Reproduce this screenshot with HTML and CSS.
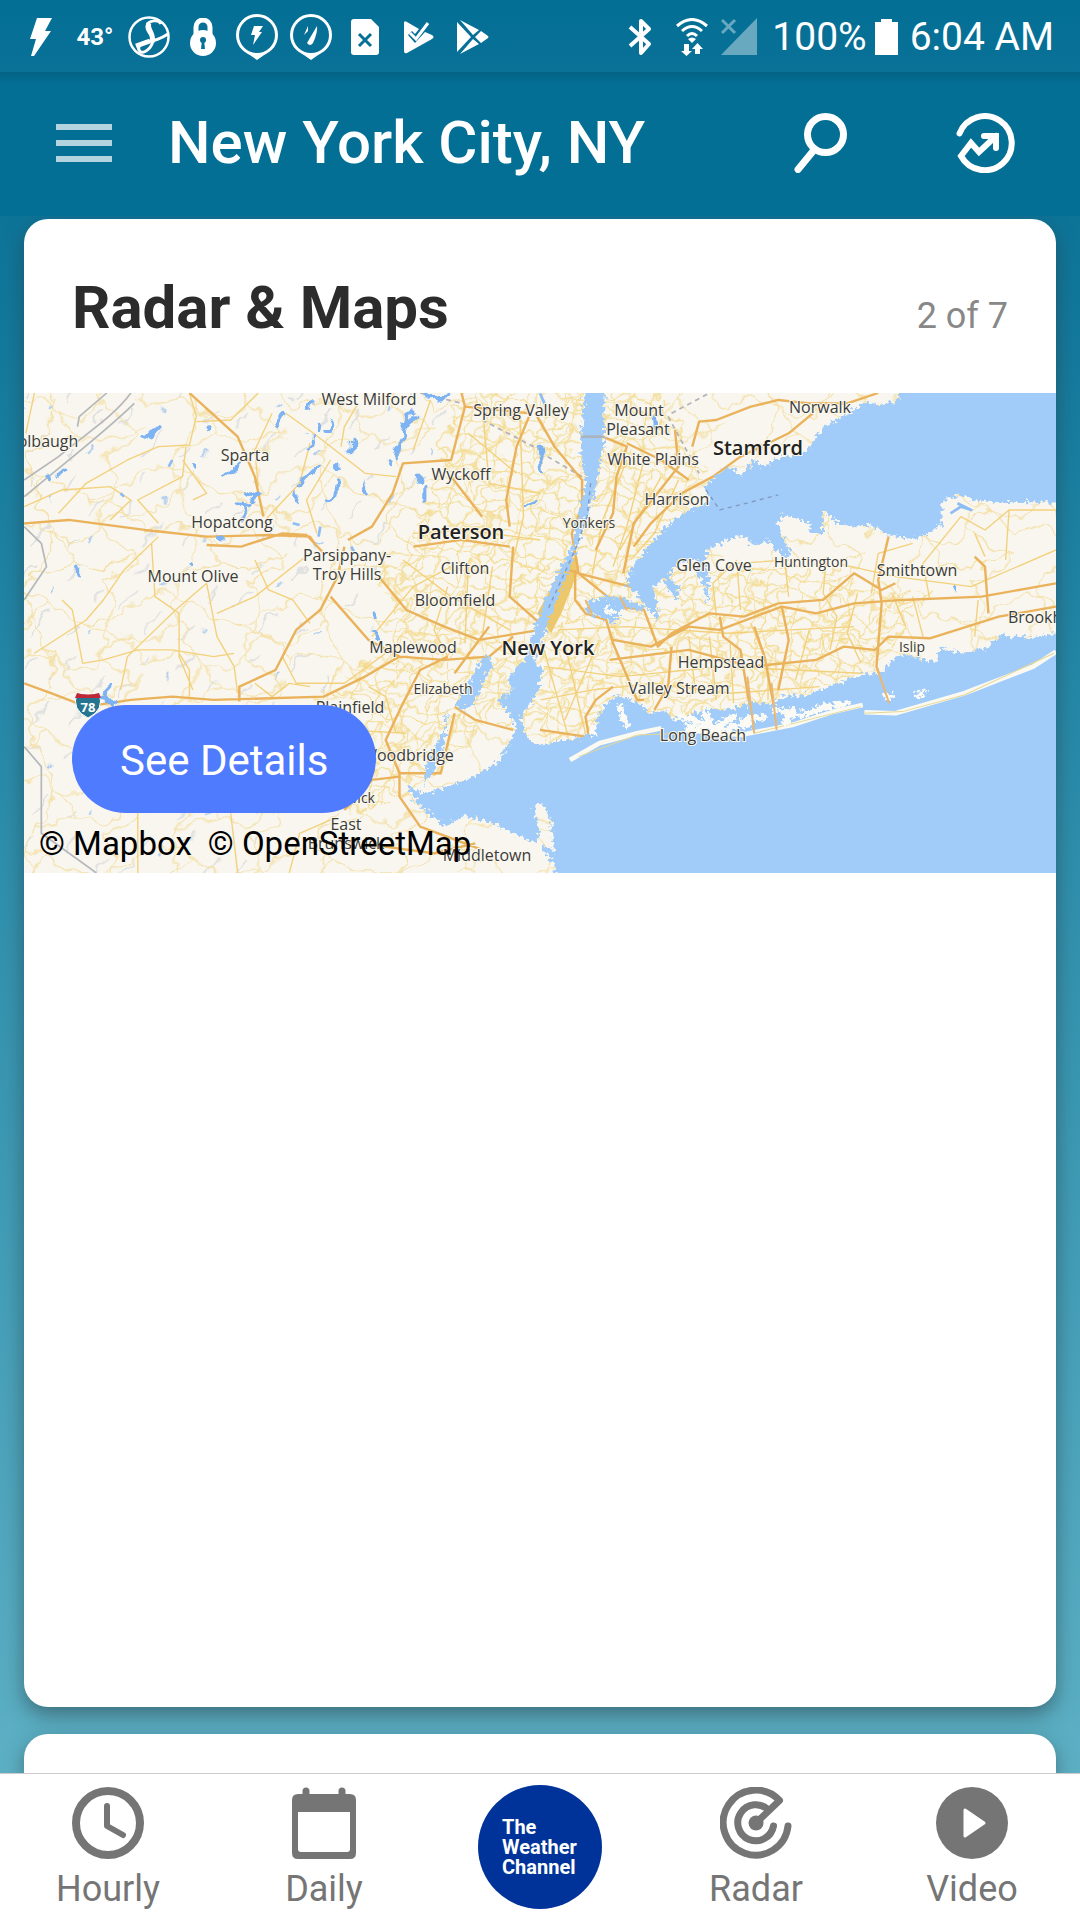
FILE: index.html
```html
<!DOCTYPE html>
<html lang="en">
<head>
<meta charset="utf-8">
<meta name="viewport" content="width=device-width, initial-scale=1">
<title>New York City, NY</title>
<link rel="stylesheet" href="styles.css">
</head>
<body>
<div class="status">
  <div class="notices">
    <svg width="22" height="38" viewBox="0 0 22 38"><path d="M7 0H22L15 13H21L4 38H1L6 21H0Z" fill="#fff"/></svg>
    <span class="temp">43°</span>
    <svg width="42" height="42" viewBox="0 0 42 42" fill="none" stroke="#fff"><circle cx="21" cy="21" r="19.500" stroke-width="2.500"/><path d="M33 8C31 3 20 4 19 10C18 17 28 20 24 28C21 35 13 39 11 34C9 30 14 27 18 26C26 25 34 22 40 18" stroke-width="3"/><path d="M21 7C18 13 27 18 24 26M8 30L22 25" stroke-width="5"/></svg>
    <svg width="26" height="38" viewBox="0 0 26 38"><path d="M6 17V9A7 7 0 0 1 20 9V17" fill="none" stroke="#fff" stroke-width="5"/><circle cx="13" cy="25" r="13" fill="#fff"/><circle cx="13" cy="22" r="3" fill="#067095"/><path d="M12 22H14L15 31H11Z" fill="#067095"/></svg>
    <svg class="pin" width="42" height="46" viewBox="0 0 42 46"><circle cx="21" cy="21" r="19.500" fill="none" stroke="#fff" stroke-width="3"/><path d="M11 39H31L21 46Z" fill="#fff"/><path d="M18 12H27L23 18H26L17 31L19 21H15Z" fill="#fff"/></svg>
    <svg class="pin" width="42" height="46" viewBox="0 0 42 46"><circle cx="21" cy="21" r="19.500" fill="none" stroke="#fff" stroke-width="3"/><path d="M11 39H31L21 46Z" fill="#fff"/><path d="M27 12Q28 18 23 29Q20 33 17 29ZM18 12L18 17L14 21Z" fill="#fff"/></svg>
    <svg width="28" height="36" viewBox="0 0 28 36"><path d="M3 0H20L28 8V33Q28 36 25 36H3Q0 36 0 33V3Q0 0 3 0Z" fill="#fff"/><path d="M8 15L20 27M20 15L8 27" stroke="#067095" stroke-width="3"/></svg>
    <svg width="30" height="34" viewBox="0 0 30 34"><path d="M0 3Q0 0 3 2L15 9L11 14L8 11L4 15L11 23L21 12L28 15Q31 17 28 19L3 33Q0 34 0 31Z" fill="#fff"/><path d="M6 13L12 19L24 3" fill="none" stroke="#fff" stroke-width="3"/></svg>
    <svg width="32" height="36" viewBox="0 0 32 36" fill="#fff"><path d="M0 3L14 18L0 33ZM3 1L22 11L16 16ZM3 35L22 25L16 20ZM24 12L31 17Q32 18 31 19L24 24L18 18Z"/></svg>
  </div>
  <div class="system">
    <svg class="bluetooth" width="24" height="40" viewBox="0 0 24 40"><path d="M2 10L21 27L13 36V4L21 12L2 29" fill="none" stroke="#fff" stroke-width="4" stroke-linejoin="round"/></svg>
    <svg class="wifi" width="32" height="38" viewBox="0 0 32 38"><path d="M1 8Q16-5 31 8M6 13Q16 4 26 13M11 18Q16 13 21 18" fill="none" stroke="#fff" stroke-width="3"/><path d="M12 21Q16 18 20 21L16 25ZM8 26H13V33H16L10.500 38L5 33H8ZM19 36V31H16L21.500 25L27 31H24V36Z" fill="#fff"/></svg>
    <svg class="signal" width="36" height="38" viewBox="0 0 36 38"><path d="M36 0V37H0Z" fill="#68a9c0"/><path d="M1 2L14 15M14 2L1 15" stroke="#68a9c0" stroke-width="3"/></svg>
    <span>100%</span>
    <svg class="battery" width="23" height="36" viewBox="0 0 23 36"><path d="M6 0H17V3H23V36H0V3H6Z" fill="#fff"/></svg>
    <span>6:04 AM</span>
  </div>
</div>

<header class="appbar">
  <button class="icon menu" aria-label="Menu"><svg width="56" height="38" viewBox="0 0 56 38"><path d="M0 3H56M0 19H56M0 35H56" stroke="#b3d4df" stroke-width="6"/></svg></button>
  <h1>New York City, NY</h1>
  <button class="icon" aria-label="Search"><svg width="54" height="60" viewBox="0 0 54 60" fill="none" stroke="#fff" stroke-width="7" stroke-linecap="round"><circle cx="31.500" cy="21.500" r="18"/><path d="M20 37L4 56.500"/></svg></button>
  <button class="icon" aria-label="Trending"><svg width="60" height="60" viewBox="0 0 60 60" fill="none" stroke="#fff" stroke-width="6" stroke-linejoin="miter" stroke-linecap="round"><path d="M3.500 20.500A27 27 0 1 1 5 43L15 30L23 39L40 23M28 23H40V35"/></svg></button>
</header>

<main>
  <section class="card">
    <div class="card-head"><h2>Radar &amp; Maps</h2><span class="count">2 of 7</span></div>
    <div class="map">
      <svg class="tiles" viewBox="24 393 1032 480" preserveAspectRatio="xMidYMid slice" role="img" aria-label="Map of the New York area">
        <defs>
          <pattern id="rural" width="420" height="380" patternUnits="userSpaceOnUse">
            <path d="M0 60Q60 20 130 70T250 130T420 60M90 0Q70 90 130 180T90 380M0 250Q90 190 170 250T300 210T420 250M300 0Q360 80 310 150T360 280T300 380M130 70L40 170L0 190M250 130L310 150M170 250L220 330L300 350L420 300M220 330L90 370M310 150L420 190" fill="none" stroke="#f4e0a8" stroke-width="4"/>
          </pattern>
          <pattern id="urban" width="150" height="130" patternUnits="userSpaceOnUse" patternTransform="rotate(12)">
            <path d="M0 20L60 10L150 20M0 70L50 80L110 60L150 70M20 0L30 60L20 130M70 0L60 50L80 130M115 0L125 70L115 130M0 105L80 110L150 105M30 60L70 0M80 130L125 70" fill="none" stroke="#f4dc92" stroke-width="4"/>
          </pattern>
          <pattern id="hills" width="330" height="270" patternUnits="userSpaceOnUse">
            <path d="M20 140L60 95M90 220L140 160M190 60L230 15M270 130L300 90M200 230L220 205M80 40L100 20" fill="none" stroke="#dfe0e0" stroke-width="6" stroke-linecap="round"/>
            <path d="M140 90L150 75M260 225L270 205" stroke="#b4cfef" stroke-width="7"/>
          </pattern>
          <filter id="wander" filterUnits="userSpaceOnUse" x="70" y="560" width="3020" height="1480">
            <feTurbulence type="fractalNoise" baseFrequency=".02" numOctaves="2" seed="4"/>
            <feDisplacementMap in="SourceGraphic" scale="60" xChannelSelector="R" yChannelSelector="G"/>
          </filter>
          <filter id="coast" filterUnits="userSpaceOnUse" x="1100" y="540" width="2000" height="1520">
            <feTurbulence type="fractalNoise" baseFrequency=".09" numOctaves="2" seed="8"/>
            <feDisplacementMap in="SourceGraphic" scale="36" xChannelSelector="R" yChannelSelector="G"/>
          </filter>
        </defs>
        <g transform="translate(0 200) scale(.3444 .3333)" fill="none" stroke-linejoin="round">
          <path d="M70 579H3066V2019H70Z" fill="#f8f6ee"/>
          <g filter="url(#wander)">
            <path d="M20 540H1340L1160 1000L1080 1330L700 2060H20Z" fill="url(#hills)"/>
            <path d="M20 540H3100V2060H20Z" fill="url(#rural)"/>
            <path d="M1340 540L1900 540L2050 800L1900 1100L2300 1100L2700 1180L2560 1400L2100 1560L1600 1640L1420 1560L1180 1800L1000 1850L1080 1500L900 1500L1180 1290L1060 1100L1200 1000Z" fill="url(#urban)"/>
          </g>
          <path d="M1560 1240L1640 1090L1670 1070L1680 1110L1630 1240L1600 1300Z" fill="#edc76b"/>
          <path d="M380 579C330 650 250 700 170 770L70 840M310 579L230 650L225 680M390 610C300 700 210 770 70 890M70 980L120 1030L135 1100L70 1200M70 1640L120 1700V1900L280 2019" stroke="#b5b8bb" stroke-width="5"/>
          <path d="M1220 579L1340 610M1400 660L1568 750M1590 770L1690 830M1950 640L2060 579M1940 650L2030 820" stroke="#b1b1bb" stroke-width="5" stroke-dasharray="14 12"/>

          <g stroke="#f3d17c" stroke-width="4">
            <path d="M100 579L75 700M170 940L250 850L370 780L460 740L550 735L570 650L550 579M570 665L670 660L750 579M790 640L740 750L750 860M990 740L1000 680L1040 610M830 640L910 700L1060 820L1150 830M70 920L180 870L320 860L380 900L320 960M460 970L400 900L530 830L540 740M530 780L600 880L560 900M770 960L870 850L900 730M920 1000L890 900L960 780"/>
            <path d="M100 1360L250 1260L300 1200L360 1110L460 1010M440 1030L450 1190L520 1240V1370L560 1470M600 1150L630 1310L680 1400L690 1480M240 1390L210 1230L180 1200M240 1390L300 1380L400 1350L500 1350L620 1370L680 1360M550 1490L550 1410L520 1360M600 1150L510 1230L370 1370L350 1470M630 1240L740 1190L900 1060M740 1080L780 1170L850 1200L900 1270M820 1370L860 1450H1000L1120 1360M740 1450L790 1490L840 1450L900 1460"/>
            <path d="M400 1840V2019M670 1840L690 2019M840 2019L870 1900L960 1860M1000 1590L1180 1600M1150 1600L1120 1490L1070 1460M1300 1160L1260 1290L1300 1370M1360 1090L1350 1330M1430 1100L1400 1310M1170 1080L1310 1190L1480 1290M1080 1310L1200 1160L1310 1100M1400 610L1420 850L1568 880M1250 600L1200 750M1360 700L1500 820M1510 660L1520 950L1490 1080M1200 1000L1350 990L1568 1020"/>
            <path d="M1970 840L1900 1000L1840 1070M1870 780L1820 980L1780 1100M1820 780L1750 960L1720 1120M1920 830L1800 1050M2080 1250L2070 1150L2140 1080M2150 1230L2140 1090L2290 1080M2290 1190L2280 1100M2400 1070L2390 1180L2430 1250L2410 1350M2490 1180L2460 1300L2500 1390M2530 1180L2550 1060L2650 1030M2700 1200L2680 1090L2790 950L2860 990L2930 930L3066 930M2930 930L2920 1080M2830 1000L2860 1070M2180 1270L2230 1400V1500M2350 1290L2310 1440M2000 1310L2020 1480M2060 1310L2080 1500M2120 1330L2130 1510M2650 1190L2680 1310M2840 1200L2830 1310"/>
            <path d="M2430 1090L2600 1130L2820 1160L3066 1050M2630 1280L2590 1180M1620 1290L1820 1280L2110 1300L2480 1280M1580 1400L1800 1430L2100 1400L2500 1420M1570 1500L1720 1470L1900 1450L2120 1480L2380 1460M1640 1330L1700 1600M1580 1350L1650 1610M1740 1320L1640 1560"/>
          </g>

          <g stroke="#eab25b" stroke-width="7">
            <path d="M1340 579L1350 620L1330 700L1310 780L1170 790L1140 880L1080 980L1010 1020M550 579L690 710L740 830L765 950M70 970L200 960L420 990L600 1010L780 1005L900 1010L920 1040M600 1035L700 1040L820 1000L890 1005L940 1060M1350 620L1540 640L1500 740L1470 900L1480 980M1310 830L1400 950M1200 1040L1340 1020L1480 1040"/>
            <path d="M70 1450L150 1480L250 1520L380 1500L500 1490L620 1500L940 1490L1060 1430L1160 1370L1290 1380L1420 1370L1490 1310M695 1505V1460L800 1410L860 1290L930 1230L980 1130L1000 1040M960 1190L1070 1320L1160 1370M1100 1130L1180 1230L1290 1280L1390 1320L1568 1290M1490 1040L1480 1190L1568 1270M1300 1370L1220 1410L1170 1510L1120 1620L1160 1720V1790L1220 1880L1400 1950M1160 1730L1080 1740L1000 1830M1160 1720L1280 1720L1320 1540M1320 1520L1380 1560L1490 1590M1380 1930L1260 1960L970 1920M1420 1280L1320 1420"/>
            <path d="M2550 579L2460 610H2350L2260 600L2180 620L2080 660L2030 665L2010 740M2360 640L2290 700L2150 770L2070 830L1980 880L1890 970L1840 1040M1560 650L1610 740L1690 840L1690 920L1660 1000L1680 1120M1750 710L1820 740L1790 830L1780 940L1730 1050M1820 730L1920 780L2000 840M1960 690L1970 800L1840 970L1810 1120"/>
            <path d="M1650 1110L1680 1120L1850 1165M1670 1110V1200L1700 1240L1760 1260L1780 1330L1850 1500H1870M1680 1120L1800 1220L1870 1230L1910 1340L1950 1300L2060 1240L2160 1250L2260 1210L2390 1200L2480 1120L2560 1170L2600 1150M1780 1320L1890 1340L2000 1280L2090 1290L2270 1220L2370 1240L2480 1210L2620 1200L2850 1190L3066 1150M2090 1250L2100 1310L2150 1350L2190 1600M2270 1220L2290 1320L2260 1470M2190 1280L2220 1370L2260 1590M2580 1010L2550 1140L2560 1210L2545 1400L2580 1500M2830 1070L2860 1100L2870 1240M1770 1380L2000 1350L2180 1400L2370 1380L2450 1340L2540 1350L2580 1310L2700 1315L2900 1250L3066 1220M1950 1340L1940 1460L1900 1530M1710 1610L1700 1550L1730 1500L1780 1460M1568 1590L1700 1610"/>
          </g>

          <g fill="#a1ccfa" filter="url(#coast)">
            <path d="M2618 540L2603 605 2553 615 2518 605 2468 635 2428 660 2388 680 2358 735 2328 760 2268 770 2215 800 2188 780 2150 830 2118 800 2088 820 2048 855 2058 905 1998 930 1943 970 1898 1020 1868 1060 1833 1105 1818 1150 1860 1195 1895 1240 1912 1265 1905 1190 1895 1165 1925 1135 1950 1180 1968 1200 1972 1160 1940 1130 1970 1085 2045 1082 2060 1045 2110 1020 2160 1005 2190 1040 2230 1020 2260 1060 2295 1075 2290 1040 2265 1000 2260 970 2268 945 2350 965 2355 1000 2390 1000 2388 925 2425 965 2468 980 2528 975 2580 1005 2658 1018 2735 975 2733 905 2775 885 2855 905 3096 908V540Z"/>
            <path d="M3096 1290L3000 1315 2900 1305 2870 1345 2790 1360 2730 1340 2720 1390 2640 1365 2600 1370 2560 1420 2500 1425 2420 1455 2340 1485 2270 1490 2240 1515 2190 1505 2120 1530 2050 1525 2000 1545 1960 1560 1930 1530 1890 1540 1840 1500 1780 1490 1740 1540 1725 1590 1680 1615 1568 1635 1535 1620 1515 1580 1515 1540 1550 1500 1568 1450 1575 1410 1545 1370 1500 1400 1475 1440 1490 1470 1445 1500 1480 1540 1500 1590 1450 1680 1380 1730 1300 1760 1230 1780 1185 1760 1210 1810 1290 1880 1350 1850 1420 1865 1500 1905 1560 1930 1568 1900 1550 1820 1575 1810 1600 1860 1608 1950 1612 2050H3096Z"/>
            <path d="M1698 540H1756L1753 740 1725 880 1693 990 1658 1090 1600 1240 1550 1390 1520 1390 1550 1290 1583 1200 1660 1040 1700 850 1686 740Z"/>
            <path d="M1410 1360L1432 1390 1400 1450 1385 1500 1350 1530 1320 1520 1365 1440ZM1300 1520L1290 1650 1230 1760 1240 1680 1285 1600ZM1700 1210L1750 1190 1800 1190 1850 1210 1880 1230 1810 1225 1780 1270 1740 1250 1710 1240ZM1640 2019L1580 1960 1568 1930 1600 1950ZM2045 1050L2060 1150 2055 1210 2040 1150 2020 1100Z"/>
          </g>
          <path d="M1655 1680L1740 1630L1850 1600L1920 1585M1990 1590L2150 1605L2300 1575L2420 1535L2505 1515M2510 1537L2600 1540L2700 1510L2800 1480L2900 1440L3000 1400L3066 1355" stroke="#fcfaf0" stroke-width="14"/>
          <path d="M1680 1670L1850 1605L1990 1600M2190 1600L2500 1520M2510 1540L2620 1535L2800 1485L3060 1360" stroke="#e3d694" stroke-width="3"/>
          <g filter="url(#coast)"><path d="M1980 1550L2080 1580L2130 1550M2000 1580L2120 1590M2160 1560L2220 1550M2250 1530L2330 1545L2400 1520L2460 1510M2570 1490H2590M2660 1485L2690 1480M1800 1520L1820 1580M1720 1580L1725 1615M1760 1230L1790 1240M2060 1560L2040 1530M2300 1530L2280 1570M2120 1580L2180 1570" stroke="#fbfaf4" stroke-width="18" stroke-linecap="round" stroke-dasharray="22 14"/></g>
          <path d="M1700 1200L1720 1245M1800 1190L1820 1230M2170 1430L2190 1600M2240 1450L2255 1590M2545 1400L2582 1510" stroke="#e8b773" stroke-width="6"/>
          <path d="M1715 850L1705 950L1670 1050L1590 1230M2050 870L2090 930L2260 885" stroke="#8199bd" stroke-width="4" stroke-dasharray="12 12"/>
          <path d="M1686 710H1753" stroke="#aab4bf" stroke-width="8"/>

          <g filter="url(#wander)"><path d="M910 600L905 630M925 665L920 690M960 655L965 690L945 690M1015 710L1012 745M1195 640L1170 700L1160 740L1145 760M1200 655L1180 665M900 710L890 750M915 810L880 850M980 850L970 890L950 905M985 780L985 805M690 790L645 830M430 705L460 690M450 695L415 715M720 890L740 870L735 910M700 910L710 950M690 910L725 920M140 830L145 835M170 830L195 820M870 880L865 905M1235 870L1235 900M1210 830L1215 855M1060 860L1075 880M575 800L570 815M600 685L605 690M805 670L825 650M1120 780L1125 800M1570 740L1580 800M1900 640L1905 680M1085 1240L1088 1260M1090 1300L1095 1320M550 1080L560 1090M220 1110L230 1120M315 1460L310 1510M290 1490L330 1500M630 1010L640 1015M2770 1165L2775 1180M1250 590L1290 582M1555 910L1540 920" stroke="#7db3f2" stroke-width="12" stroke-linecap="round"/></g>
          <path d="M1568 580L1585 620M930 980L925 1010M500 780L490 800M350 880L360 890M850 970L870 975M1020 1040L1030 1060M2760 940L2790 920L2820 930L2780 910" stroke="#8dbdf4" stroke-width="8"/>
        </g>

        <g class="shield"><path d="M77 693Q88 696 99 693Q105 710 88 718Q71 710 77 693Z" fill="#267590" stroke="#fff"/><path d="M77 693Q88 696 99 693L101 698H75Z" fill="#c02837"/><text x="88" y="712">78</text></g>
        <g class="place">
          <text x="369" y="405">West Milford</text><text x="521" y="416">Spring Valley</text>
          <text x="639" y="416">Mount</text><text x="638" y="435">Pleasant</text>
          <text x="653" y="465">White Plains</text><text x="820" y="413">Norwalk</text>
          <text x="677" y="505">Harrison</text><text x="245" y="461">Sparta</text>
          <text x="461" y="480">Wyckoff</text><text x="48" y="447">olbaugh</text>
          <text x="232" y="528">Hopatcong</text><text x="193" y="582">Mount Olive</text>
          <text x="347" y="561">Parsippany-</text><text x="347" y="580">Troy Hills</text>
          <text x="465" y="574">Clifton</text><text x="455" y="606">Bloomfield</text>
          <text x="413" y="653">Maplewood</text><text x="350" y="713">Plainfield</text>
          <text x="408" y="761">Woodbridge</text><text x="346" y="830">East</text>
          <text x="346" y="849">Brunswick</text><text x="487" y="861">Middletown</text>
          <text x="714" y="571">Glen Cove</text><text x="917" y="576">Smithtown</text>
          <text x="1053" y="623">Brookhaven</text><text x="721" y="668">Hempstead</text>
          <text x="679" y="694">Valley Stream</text><text x="703" y="741">Long Beach</text>
        </g>
        <g class="place small">
          <text x="589" y="528">Yonkers</text><text x="443" y="694">Elizabeth</text>
          <text x="325" y="803">New Brunswick</text><text x="811" y="567">Huntington</text><text x="912" y="652">Islip</text>
        </g>
        <g class="place city">
          <text x="758" y="455">Stamford</text><text x="461" y="539">Paterson</text><text x="548" y="655">New York</text>
        </g>
      </svg>
      <div class="overlay">
        <button class="details">See Details</button>
        <div class="credits"><a href="#mapbox">© Mapbox</a><a href="#osm">© OpenStreetMap</a></div>
      </div>
    </div>
  </section>
  <section class="card next"></section>
</main>

<nav class="tabs">
  <a href="#hourly"><svg width="72" height="72" viewBox="0 0 72 72" fill="none" stroke="#757575"><circle cx="36" cy="36" r="32" stroke-width="8"/><path d="M35 19V39L51 48" stroke-width="6" stroke-linecap="round" stroke-linejoin="round"/></svg>Hourly</a>
  <a href="#daily"><svg width="64" height="72" viewBox="0 0 64 72" fill="#757575"><path fill-rule="evenodd" d="M6 7H58Q64 7 64 13V66Q64 72 58 72H6Q0 72 0 66V13Q0 7 6 7ZM6 25V62Q6 65 9 65H55Q58 65 58 62V25Z"/><path d="M14 4V12M50 4V12" stroke="#757575" stroke-width="7" stroke-linecap="round"/></svg>Daily</a>
  <a class="home" href="#home"><span>The<br>Weather<br>Channel</span></a>
  <a href="#radar"><svg width="72" height="72" viewBox="0 0 72 72" fill="none" stroke="#757575" stroke-width="7" stroke-linecap="round" stroke-linejoin="round"><path d="M68 39A32.500 32.500 0 1 1 59.500 13.500L36 36M53.500 39A18 18 0 1 1 48.500 23"/><circle cx="36" cy="36" r="7.500" fill="#757575" stroke="none"/></svg>Radar</a>
  <a href="#video"><svg width="72" height="72" viewBox="0 0 72 72"><circle cx="36" cy="36" r="36" fill="#757575"/><path d="M29 23V49L48 36Z" fill="#fff" stroke="#fff" stroke-width="3" stroke-linejoin="round"/></svg>Video</a>
</nav>
</body>
</html>
```

FILE: styles.css
```css
* { box-sizing: border-box; }
body {
  margin: 0;
  height: 100vh;
  display: flex;
  flex-direction: column;
  font-family: Roboto, sans-serif;
  background: #0d7498;
}
svg { display: block; flex: none; }
button { font: inherit; border: 0; cursor: pointer; }
a { text-decoration: none; }
h1, h2 { margin: 0; }

.status {
  display: flex;
  justify-content: space-between;
  height: 72px;
  padding: 2px 26px 0 14px;
  color: #fff;
  background: linear-gradient(#036f95, #0a7197);
}
.notices {
  display: grid;
  grid-template-columns: repeat(9, 54px);
  align-items: center;
  justify-items: center;
}
.temp { font-size: 24px; font-weight: 700; }
.system { display: flex; align-items: center; font-size: 39px; }
.bluetooth { margin-right: 24px; }
.wifi { margin-right: 13px; }
.signal { margin-right: 15px; }
.battery { margin: 0 12px 0 8px; }

.appbar {
  display: flex;
  align-items: center;
  height: 144px;
  flex: none;
  padding: 0 64px 2px 56px;
  color: #fff;
  background: linear-gradient(#046285, #036f95 12px);
}
.appbar h1 { flex: 1; font-size: 60px; font-weight: 500; line-height: 72px; }
.icon { padding: 0; background: none; }
.icon + .icon { margin-left: 108px; }
.menu { margin-right: 56px; }

main {
  flex: 1;
  min-height: 0;
  display: flex;
  flex-direction: column;
  gap: 27px;
  padding: 3px 24px 0;
  overflow: hidden;
  background: linear-gradient(#0d7498, #2f8fac 42%, #5db0c4);
}
.card {
  flex: 1;
  border-radius: 24px;
  background: #fff;
  box-shadow: 0 8px 20px rgba(40, 60, 70, .55);
}
.card.next { flex: none; height: 39px; border-radius: 24px 24px 0 0; }
.card-head {
  display: flex;
  justify-content: space-between;
  align-items: baseline;
  padding: 54px 48px 50px;
}
.card-head h2 { font-size: 60px; line-height: 70px; color: #2c2c2c; }
.count { font-size: 36px; color: #888; }

.map { display: grid; }
.map > * { grid-area: 1 / 1; }
.tiles { width: 100%; aspect-ratio: 1032 / 480; }
.overlay {
  display: flex;
  flex-direction: column;
  align-items: flex-start;
  justify-content: flex-end;
  z-index: 1;
}
.details {
  height: 108px;
  margin-left: 48px;
  padding: 2px 48px 0;
  border-radius: 54px;
  font-size: 42px;
  color: #fff;
  background: #4f7bff;
}
.credits { display: flex; gap: 16px; padding: 11px 15px 9px; font-size: 33px; line-height: 40px; }
.credits a { color: #000; }

.place, .shield { font-family: "Open Sans", "Noto Sans", sans-serif; text-anchor: middle; }
.place {
  font-size: 16px;
  fill: #3b3b3b;
  stroke: #faf8ee;
  stroke-width: 2px;
  paint-order: stroke;
}
.small { font-size: 14px; }
.city { font-size: 20px; font-weight: 600; fill: #222; }
.shield text { font-size: 13px; font-weight: 700; fill: #fff; }

.tabs {
  display: grid;
  grid-template-columns: repeat(5, 1fr);
  flex: none;
  height: 147px;
  border-top: 1px solid #ccc;
  background: #fff;
}
.tabs a {
  display: flex;
  flex-direction: column;
  align-items: center;
  gap: 9px;
  padding-top: 13px;
  font-size: 36px;
  line-height: 42px;
  color: #757575;
}
.tabs .home { padding-top: 11px; }
.home span {
  display: flex;
  flex-direction: column;
  justify-content: center;
  width: 124px;
  height: 124px;
  padding-left: 24px;
  border-radius: 50%;
  font-size: 20px;
  font-weight: 700;
  line-height: 20px;
  color: #fff;
  background: #003399;
}
```
